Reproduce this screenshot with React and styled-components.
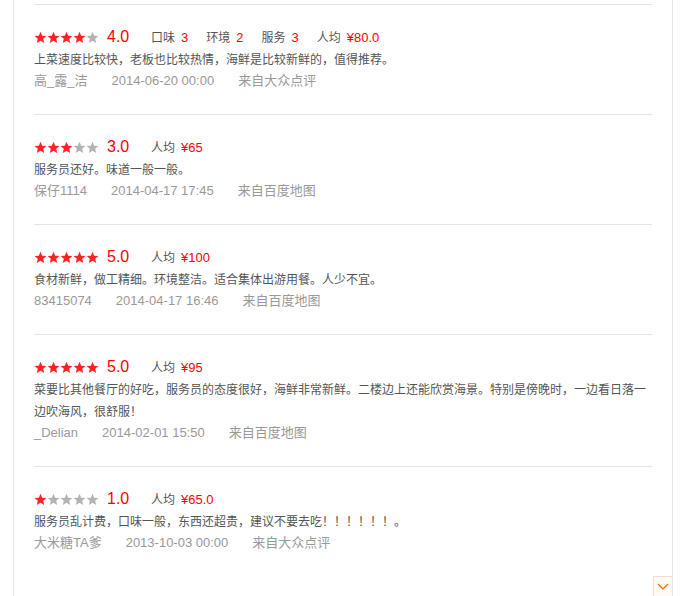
import React from 'react';
import styled, { createGlobalStyle } from 'styled-components';

const GlobalStyle = createGlobalStyle`
  html, body {
    margin: 0;
    padding: 0;
    background: #fff;
  }
  body {
    font-family: "Liberation Sans", "Noto Sans CJK SC", sans-serif;
    font-size: 12px;
    color: #333;
  }
`;

const reviews = [
  {
    score: 4,
    tags: [['口味', '3'], ['环境', '2'], ['服务', '3'], ['人均', '¥80.0']],
    text: '上菜速度比较快，老板也比较热情，海鲜是比较新鲜的，值得推荐。',
    user: '高_露_洁',
    date: '2014-06-20 00:00',
    from: '来自大众点评',
  },
  {
    score: 3,
    tags: [['人均', '¥65']],
    text: '服务员还好。味道一般一般。',
    user: '保仔1114',
    date: '2014-04-17 17:45',
    from: '来自百度地图',
  },
  {
    score: 5,
    tags: [['人均', '¥100']],
    text: '食材新鲜，做工精细。环境整洁。适合集体出游用餐。人少不宜。',
    user: '83415074',
    date: '2014-04-17 16:46',
    from: '来自百度地图',
  },
  {
    score: 5,
    tags: [['人均', '¥95']],
    text: '菜要比其他餐厅的好吃，服务员的态度很好，海鲜非常新鲜。二楼边上还能欣赏海景。特别是傍晚时，一边看日落一边吹海风，很舒服！',
    user: '_Delian',
    date: '2014-02-01 15:50',
    from: '来自百度地图',
  },
  {
    score: 1,
    tags: [['人均', '¥65.0']],
    text: '服务员乱计费，口味一般，东西还超贵，建议不要去吃！！！！！！。',
    user: '大米糖TA爹',
    date: '2013-10-03 00:00',
    from: '来自大众点评',
  },
];

const Panel = styled.div`
  margin-left: 13px;
  width: 618px;
  min-height: 100vh;
  padding: 4px 20px 0;
  border-left: 1px solid #e3e3e3;
  border-right: 1px solid #e3e3e3;
`;

const Item = styled.div`
  border-top: 1px solid #e5e5e5;
  padding: 21px 0 22px;
  line-height: 22px;
`;

const TopRow = styled.div`
  display: flex;
  align-items: center;
  height: 22px;
`;

const Stars = styled.div`
  display: flex;
  width: 65px;
`;

const Score = styled.span`
  margin-left: 8px;
  width: 44px;
  font-size: 16px;
  color: #f00;
`;

const Tag = styled.span`
  margin-right: 18px;
  font-family: "Noto Sans CJK SC", sans-serif;
  font-size: 12px;
  color: #555;

  b {
    font-family: "Liberation Sans", sans-serif;
    font-size: 13px;
    font-weight: normal;
    color: #f00;
    margin-left: 6px;
  }
`;

const Comment = styled.p`
  margin: 0;
  color: #555;
  font-family: "Noto Sans CJK SC", sans-serif;
  font-size: 12px;
`;

const Meta = styled.div`
  display: flex;
  gap: 24px;
  color: #999;
  font-size: 13px;
`;

const MoreButton = styled.div`
  position: fixed;
  right: 16px;
  bottom: -2px;
  width: 18px;
  height: 20px;
  background: #fffaf5;
  border: 1px solid #f6ddc9;
  border-right: none;
  display: flex;
  align-items: center;
  justify-content: center;
`;

const Star = ({ on }) => (
  <svg width="13" height="13" viewBox="0 0 24 24">
    <path
      d="M12 1.5l3.1 7.2 7.8.6-5.9 5.1 1.8 7.6L12 17.9 5.2 22l1.8-7.6-5.9-5.1 7.8-.6z"
      fill={on ? '#f22' : '#b3b3b3'}
    />
  </svg>
);

const Review = ({ r }) => (
  <Item>
    <TopRow>
      <Stars>
        {[1, 2, 3, 4, 5].map((n) => (
          <Star key={n} on={n <= r.score} />
        ))}
      </Stars>
      <Score>{r.score}.0</Score>
      {r.tags.map(([k, v]) => (
        <Tag key={k}>
          {k}
          <b>{v}</b>
        </Tag>
      ))}
    </TopRow>
    <Comment>{r.text}</Comment>
    <Meta>
      <span>{r.user}</span>
      <span>{r.date}</span>
      <span>{r.from}</span>
    </Meta>
  </Item>
);

export default function App() {
  return (
    <>
      <GlobalStyle />
      <Panel>
        {reviews.map((r, i) => (
          <Review key={i} r={r} />
        ))}
      </Panel>
      <MoreButton>
        <svg width="12" height="8" viewBox="0 0 12 8">
          <path d="M1 1l5 5 5-5" fill="none" stroke="#f60" strokeWidth="1.2" />
        </svg>
      </MoreButton>
    </>
  );
}
